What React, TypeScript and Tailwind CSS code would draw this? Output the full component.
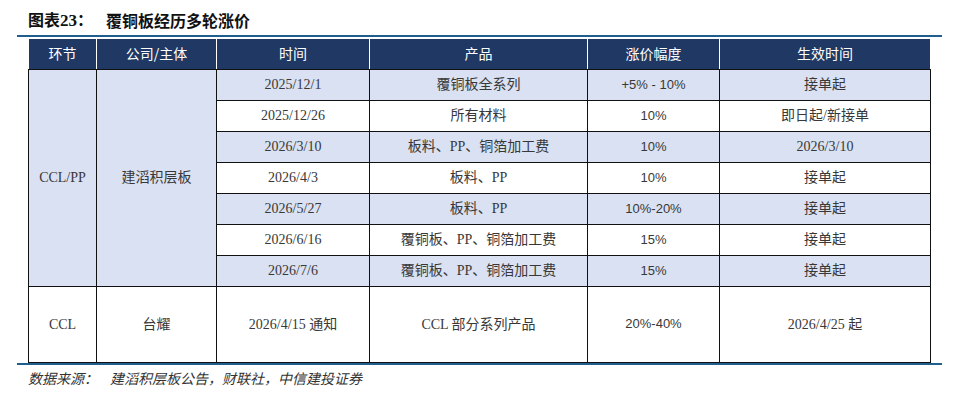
const serif = "font-['Liberation_Serif','Noto_Sans_CJK_SC',serif]";
const sans = "font-['Liberation_Sans','Noto_Sans_CJK_SC',sans-serif]";

type Row = { time: string; product: string; pct: string; eff: string };

const rows: Row[] = [
  { time: '2025/12/1', product: '覆铜板全系列', pct: '+5% - 10%', eff: '接单起' },
  { time: '2025/12/26', product: '所有材料', pct: '10%', eff: '即日起/新接单' },
  { time: '2026/3/10', product: '板料、PP、铜箔加工费', pct: '10%', eff: '2026/3/10' },
  { time: '2026/4/3', product: '板料、PP', pct: '10%', eff: '接单起' },
  { time: '2026/5/27', product: '板料、PP', pct: '10%-20%', eff: '接单起' },
  { time: '2026/6/16', product: '覆铜板、PP、铜箔加工费', pct: '15%', eff: '接单起' },
  { time: '2026/7/6', product: '覆铜板、PP、铜箔加工费', pct: '15%', eff: '接单起' },
];

const headers = ['环节', '公司/主体', '时间', '产品', '涨价幅度', '生效时间'];
const widths = ['w-[68px]', 'w-[120px]', 'w-[153px]', 'w-[218px]', 'w-[132px]', 'w-[211px]'];

const td = 'border border-[#111] text-center p-0';

export default function App() {
  return (
    <div className="w-[960px] h-[402px] bg-white pt-[9px] text-[#383838]">
      <h1 className="h-[22px] pl-[28px] flex items-center text-[16px] font-bold text-[#111] font-['Noto_Sans_CJK_SC',sans-serif]">
        <span>
          图表<span className="font-['Liberation_Serif',serif] text-[17px]">23</span>：
        </span>
        <span className="ml-[13px]">覆铜板经历多轮涨价</span>
      </h1>
      <div className="ml-[17px] mt-[4px] w-[925px] h-[2px] bg-[#1f5f8f]" />
      <table className="ml-[28px] mt-[2px] w-[902px] table-fixed border-collapse text-[14px]">
        <colgroup>
          {widths.map((w) => (
            <col key={w} className={w} />
          ))}
        </colgroup>
        <thead>
          <tr className="h-[30px] bg-[#203864]">
            {headers.map((h) => (
              <th
                key={h}
                className="border-x border-x-white border-b border-b-[#111] p-0 font-normal text-white font-['Noto_Sans_CJK_SC',sans-serif]"
              >
                {h}
              </th>
            ))}
          </tr>
        </thead>
        <tbody className={serif}>
          {rows.map((r, i) => (
            <tr key={r.time} className={`h-[31px] ${i % 2 === 0 ? 'bg-[#d9e1f2]' : 'bg-white'}`}>
              {i === 0 && (
                <>
                  <td rowSpan={7} className={`${td} bg-[#d9e1f2]`}>
                    CCL/PP
                  </td>
                  <td rowSpan={7} className={`${td} bg-[#d9e1f2]`}>
                    建滔积层板
                  </td>
                </>
              )}
              <td className={td}>{r.time}</td>
              <td className={td}>{r.product}</td>
              <td className={`${td} ${sans} text-[13px]`}>{r.pct}</td>
              <td className={td}>{r.eff}</td>
            </tr>
          ))}
          <tr className="h-[76px] bg-white">
            <td className={td}>CCL</td>
            <td className={td}>台耀</td>
            <td className={td}>2026/4/15 通知</td>
            <td className={td}>CCL 部分系列产品</td>
            <td className={`${td} ${sans} text-[13px]`}>20%-40%</td>
            <td className={td}>2026/4/25 起</td>
          </tr>
        </tbody>
      </table>
      <div className="ml-[17px] w-[925px] h-[2px] bg-[#1f5f8f]" />
      <p className="mt-[3px] pl-[28px] text-[14px] italic text-[#333] font-['Noto_Sans_CJK_SC',sans-serif]">
        数据来源：<span className="ml-[12px]">建滔积层板公告，财联社，中信建投证券</span>
      </p>
    </div>
  );
}
